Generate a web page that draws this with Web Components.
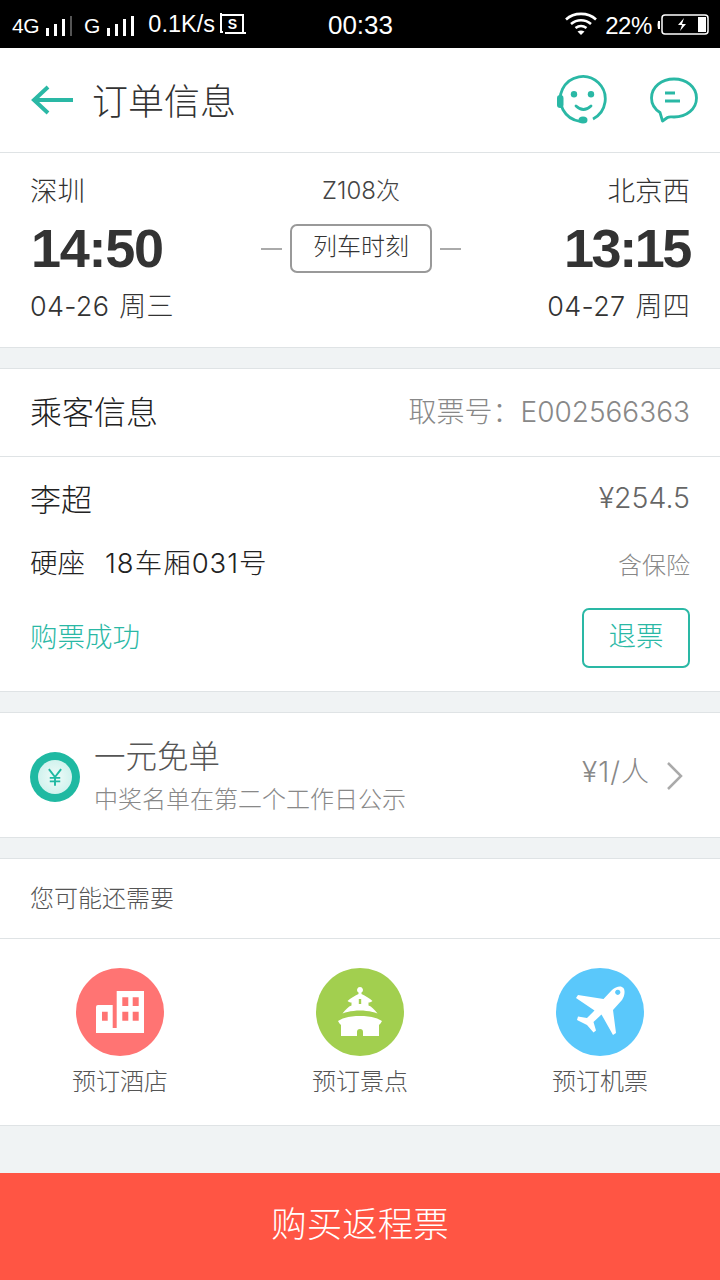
<!doctype html>
<html><head><meta charset="utf-8">
<style>
html,body{margin:0;padding:0}
body{width:720px;height:1280px;background:#f0f3f4;font-family:Inter,"Noto Sans CJK SC",sans-serif;color:#333;display:flex;flex-direction:column;overflow:hidden}
</style></head><body>
<status-bar></status-bar>
<app-header></app-header>
<train-card></train-card>
<passenger-card></passenger-card>
<promo-card></promo-card>
<services-card></services-card>
<return-button>购买返程票</return-button>
<script>
function comp(name,html){customElements.define(name,class extends HTMLElement{constructor(){super();this.attachShadow({mode:'open'}).innerHTML=html}})}
const cjk='"Liberation Sans","Noto Sans CJK SC",sans-serif';
const lite='Inter,"Noto Sans CJK SC",sans-serif';
const teal='#2ab8a5';
comp('status-bar',`<style>
:host{display:flex;height:48px;background:#000;color:#fff;align-items:center;font:24px ${cjk};flex:none;position:relative}
.l{display:flex;align-items:center;padding-left:12px;flex:1}
.r{display:flex;align-items:center;padding-right:11px;flex:1;justify-content:flex-end}
.t{font-size:26px;width:110px;text-align:center;margin-top:3px}
svg{display:block}
</style>
<div class="l"><span style="font-size:21px;letter-spacing:-.5px;margin-top:4px">4G</span>
<svg width="28" height="20" style="margin:4px 0 0 6px"><path d="M1 12h3v8H1zM9 8h3v12H9zM17 3h3v17h-3z" fill="#fff"/><path d="M25 0h2v20h-2z" fill="#555"/></svg>
<span style="font-size:21px;margin:4px 0 0 11px">G</span>
<svg width="30" height="20" style="margin:4px 0 0 6px"><path d="M1 12h3v8H1zM9 8h3v12H9zM17 3h3v17h-3zM25 0h3v20h-3z" fill="#fff"/></svg>
<span style="margin-left:12px;margin-top:0;font-size:23.500px">0.1K/s</span>
<svg width="26" height="24" viewBox="0 0 26 24" style="margin:1px 0 0 5px"><path d="M1 0v19h2M1 2h22v18M5 20h21" fill="none" stroke="#fff" stroke-width="2"/><text x="12.500" y="15.500" font-size="14" font-weight="700" text-anchor="middle" fill="#fff" font-family="Liberation Sans">S</text></svg>
</div>
<div class="t">00:33</div>
<div class="r">
<svg width="34" height="24" viewBox="0 0 34 24" style="margin-right:7px;margin-top:-2px"><g fill="none" stroke="#fff" stroke-width="2.600"><path d="M2 8.500C10 1 24 1 32 8.500"/><path d="M7 13c6-5 14-5 20 0"/><path d="M11.500 17c3.500-2.600 7.500-2.600 11 0"/></g><path d="M13.500 20.500q3.500-2 7 0L17 24z" fill="#fff"/></svg>
<span style="font-size:24px;letter-spacing:-.4px;margin-top:3px">22%</span>
<svg width="52" height="22" viewBox="0 0 52 22" style="margin-left:5px;margin-top:2px"><path d="M1 7q-1 4 0 8h2V7z" fill="#fff"/><rect x="5" y="1" width="46" height="19" rx="3" fill="none" stroke="#fff" stroke-width="1.500"/><rect x="41" y="3" width="8" height="15" fill="#fff"/><path d="M27 4l-6 7h4l-2 6 6-7h-4z" fill="#fff"/></svg>
</div>`);
comp('app-header',`<style>
:host{display:flex;height:104px;background:#fff;border-bottom:1px solid #dfe3e5;align-items:center;padding:0 22px 0 30px;flex:none}
h1{font:300 36px ${cjk};color:#333;margin:0 0 0 18px;flex:1;position:relative;top:-1px}
svg{display:block}
</style>
<svg width="44" height="36" viewBox="0 0 44 36" style="margin-top:-1px"><path d="M43 18H5M18 5L4 18 18 31" fill="none" stroke="${teal}" stroke-width="4"/></svg>
<h1>订单信息</h1>
<svg width="52" height="52" viewBox="0 0 52 52" style="margin-right:43px"><g fill="none" stroke="${teal}" stroke-width="2.800"><path d="M38 45A22.500 22.500 0 1 0 25 47.300"/><path d="M21 32q7.500 7 15 0" stroke-linecap="round"/></g><g fill="${teal}"><circle cx="19" cy="20.300" r="3.200"/><circle cx="36" cy="20.300" r="3.200"/><rect x="2" y="21" width="6.500" height="13" rx="3.200"/><ellipse cx="28" cy="46" rx="4.500" ry="3.500"/></g></svg>
<svg width="48" height="48" viewBox="0 0 48 48"><path d="M12.500 45L10 36.500C4.500 33 1.500 28 1.500 22 1.500 11 11.500 3 24 3S46.500 11 46.500 22 36.500 41 24 41C21 41 19 40.500 17.500 41.500z" fill="none" stroke="${teal}" stroke-width="2.800" stroke-linejoin="round"/><path d="M15 17h10M15 25h15" stroke="${teal}" stroke-width="3"/></svg>`);
comp('train-card',`<style>
:host{display:block;background:#fff;border-bottom:1px solid #dfe3e5;height:194px;padding:0 30px;flex:none;font-family:${lite};font-weight:300}
.g{display:grid;grid-template-columns:1fr auto 1fr;height:100%}
.c{display:flex;flex-direction:column}
.n{font-size:27.500px;line-height:30px;margin-top:23px;color:#333}
.t{font:700 54px/60px "Liberation Sans",sans-serif;letter-spacing:-1.300px;margin-top:12px;color:#333;padding-left:1px}
.d{font-size:27px;letter-spacing:.3px;word-spacing:2px;line-height:30px;margin-top:14px;color:#333;white-space:nowrap}
.r{text-align:right}
.r .t{letter-spacing:-2.400px;padding:0}
.m{align-items:center;padding-left:2px}
.z{font-size:24px;line-height:30px;margin-top:23px;color:#444}
.b{display:flex;align-items:center;margin-top:18px;gap:8px}
.b i{width:21px;height:2px;background:#aaa;display:block}
.btn{width:138px;height:44px;border:2px solid #999;border-radius:7px;display:flex;align-items:center;justify-content:center;font-size:24px;color:#333;line-height:36px;padding-bottom:1px}
.btn span{position:relative;top:-1px}
</style><div class="g">
<div class="c"><div class="n">深圳</div><div class="t">14:50</div><div class="d">04-26 周三</div></div>
<div class="c m"><div class="z">Z108次</div><div class="b"><i></i><div class="btn"><span>列车时刻</span></div><i></i></div></div>
<div class="c r"><div class="n">北京西</div><div class="t">13:15</div><div class="d">04-27 周四</div></div>
</div>`);
comp('passenger-card',`<style>
:host{display:block;background:#fff;border-top:1px solid #dfe3e5;border-bottom:1px solid #dfe3e5;margin-top:20px;flex:none;font-family:${lite};font-weight:300}
.h{height:88px;border-bottom:1px solid #dfe3e5;display:flex;justify-content:space-between;align-items:center;padding:0 30px 5px;box-sizing:border-box}
.h b{font-weight:300;font-size:32px;color:#222}
.h span{font-size:28px;color:#888}
.p{padding:0 30px;height:234px;display:flex;flex-direction:column}
.row{display:flex;justify-content:space-between;align-items:center}
.name{font-size:31px;color:#222}
.price{font-size:28.500px;color:#666}
.seat{font-size:27.500px;color:#222}
.seat span{margin-left:20px;letter-spacing:1px}
.ins{font-size:24px;color:#888;margin-top:4px}
.ok{font-size:27.500px;color:${teal};margin-top:-6px}
.btn{width:104px;height:56px;box-sizing:content-box;border:2px solid ${teal};border-radius:7px;display:flex;align-items:center;justify-content:center;color:${teal};font-size:27.500px;line-height:50px}
.btn span{position:relative;top:-2px}
</style>
<div class="h"><b>乘客信息</b><span>取票号：E002566363</span></div>
<div class="p">
<div class="row" style="height:40px;margin-top:20px"><span class="name">李超</span><span class="price">¥254.5</span></div>
<div class="row" style="height:40px;margin-top:24px"><span class="seat">硬座<span>18车厢031号</span></span><span class="ins">含保险</span></div>
<div class="row" style="margin-top:27px"><span class="ok">购票成功</span><div class="btn"><span>退票</span></div></div>
</div>`);
comp('promo-card',`<style>
:host{display:flex;align-items:center;background:#fff;border-top:1px solid #dfe3e5;border-bottom:1px solid #dfe3e5;margin-top:20px;padding:4px 30px 0;box-sizing:border-box;height:126px;flex:none;font-family:${lite};font-weight:300}
.ic{width:50px;height:50px;border-radius:50%;background:#1fb9a2;display:flex;align-items:center;justify-content:center;flex:none}
.in{width:34px;height:34px;border-radius:50%;background:radial-gradient(#f0fbf9,#c4efe9);display:flex;align-items:center;justify-content:center}
.tx{flex:1;margin-left:14px;display:flex;flex-direction:column;margin-top:-3px}
.a{font-size:31.500px;line-height:40px;color:#555}
.b{font-size:24px;line-height:30px;color:#888;margin-top:8px}
.pr{font-size:28px;letter-spacing:1px;color:#888;margin-top:-14px}
svg{display:block}
</style>
<div class="ic"><div class="in"><svg width="14" height="18" viewBox="0 0 16 20"><path d="M1 1l7 9 7-9M8 10v10M2 11h12M2 15h12" fill="none" stroke="#1fb9a2" stroke-width="2.200"/></svg></div></div>
<div class="tx"><div class="a">一元免单</div><div class="b">中奖名单在第二个工作日公示</div></div>
<div class="pr">¥1/人</div>
<svg width="18" height="30" viewBox="0 0 18 30" style="margin-left:16px;margin-right:6px;margin-top:-2px"><path d="M2 2l13 13L2 28" fill="none" stroke="#aaa" stroke-width="2.500"/></svg>`);
comp('services-card',`<style>
:host{display:block;background:#fff;border-top:1px solid #dfe3e5;border-bottom:1px solid #dfe3e5;margin-top:20px;flex:none;font-family:${lite};font-weight:300}
.h{height:80px;border-bottom:1px solid #dfe3e5;display:flex;align-items:center;padding:0 30px 5px;box-sizing:border-box;font-size:24px;color:#555}
.g{display:grid;grid-template-columns:repeat(3,240px);height:186px}
.i{display:flex;flex-direction:column;align-items:center;padding-top:29px;font-size:24px;color:#555}
.c{width:88px;height:88px;border-radius:50%;display:flex;align-items:center;justify-content:center}
.i span{margin-top:8px;line-height:36px}
svg{display:block}
</style>
<div class="h">您可能还需要</div>
<div class="g">
<div class="i"><div class="c" style="background:#ff7473"><svg width="88" height="88" viewBox="0 0 88 88"><path fill-rule="evenodd" fill="#fff" d="M22 37h14.700v23h4V23H68v42H20V39a2 2 0 0 1 2-2zM26 43.700v9h5.700v-9zM46.300 29.300v8.700h6v-8.700zM56.700 29.300v8.700h6v-8.700zM46.300 43.700v9h6v-9zM56.700 43.700v9h6v-9z"/></svg></div><span>预订酒店</span></div>
<div class="i"><div class="c" style="background:#a2cf4f"><svg width="88" height="88" viewBox="0 0 88 88"><path fill-rule="evenodd" fill="#fff" d="M44 19a3 3 0 0 1 1.500 5.600V26c4 2 8 4 11 7-1.500 1-3 1.500-4 1.500v3c3 1 6 4 9 8-2-1-3.500-1-5-1.500-8-2-17-2-25 0-1.500.5-3 .5-5 1.500 3-4 6-7 9-8v-3c-1 0-2.500-.5-4-1.500 3-3 7-5 11-7v-1.400A3 3 0 0 1 44 19zM42.800 31v5h2.400v-5z"/><path fill="#fff" d="M44 48c8 0 16 1 22 5-1 2-2 3-3 4v11H47v-4a3 3 0 0 0-6 0v4H25V57c-1-1-2-2-3-4 6-4 14-5 22-5z"/></svg></div><span>预订景点</span></div>
<div class="i"><div class="c" style="background:#5ac8fb"><svg width="88" height="88" viewBox="0 0 88 88"><path fill-rule="evenodd" fill="#fff" d="M67.500 20C65 17 60 18.500 56 22L47.500 31 22 27l-2 3 18.500 12.500L31 50l-9-1.500-1 3.500 10 5 6.500 7.500 2.500-2-2.500-8.500 8-7.500L57 67l3-2-3-23 9-10c2.500-3.500 3.500-9 1.500-12zM61.700 21.700a2.600 2.600 0 1 0 .1 0z"/></svg></div><span>预订机票</span></div>
</div>`);
comp('return-button',`<style>
:host{display:flex;margin-top:auto;height:107px;padding-bottom:10px;box-sizing:border-box;background:#ff5544;color:#fff;align-items:center;justify-content:center;font:300 35.500px ${cjk};flex:none}
</style><slot></slot>`);
</script>
</body></html>
